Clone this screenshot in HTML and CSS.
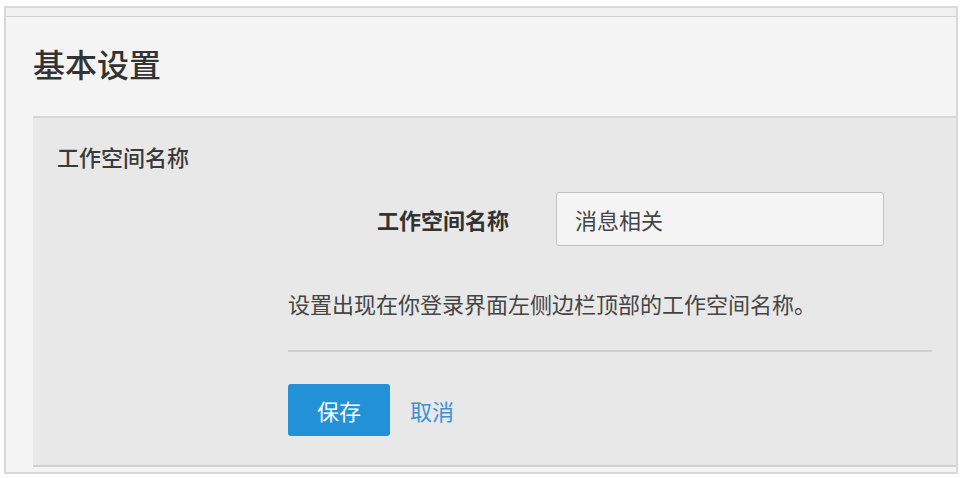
FILE: index.html
```html
<!DOCTYPE html>
<html lang="zh-CN">
<head>
    <meta charset="UTF-8" />
    <title>基本设置</title>
    <link rel="stylesheet" href="styles.css">
</head>
<body>

<div class="frame">
    <div class="top-strip"></div>

    <h1 class="page-title">基本设置</h1>

    <div class="panel">
        <div class="section-title">工作空间名称</div>

        <form class="settings-form">
            <div class="form-row">
                <label for="teamName" class="form-label">工作空间名称</label>
                <input type="text" id="teamName" class="form-input" value="消息相关" />
            </div>

            <p class="help-text">设置出现在你登录界面左侧边栏顶部的工作空间名称。</p>

            <div class="form-actions">
                <button type="button" class="btn-save">保存</button>
                <a href="#" class="link-cancel">取消</a>
            </div>
        </form>
    </div>
</div>

</body>
</html>
```

FILE: styles.css
```css
body {
    margin: 0;
    background: #fff;
    font-family: "Noto Sans CJK SC", "Noto Sans", sans-serif;
    color: #333;
}
.frame {
    margin: 6px 6px 0 4px;
    border: 2px solid #d9d9d9;
    background: #f4f4f4;
    padding-bottom: 5px;
}
.top-strip {
    height: 8px;
    background: #f0f0f0;
    border-bottom: 1px solid #d2d2d2;
}
.page-title {
    margin: 0;
    padding: 26px 0 33px 27px;
    font-size: 32px;
    line-height: 40px;
    font-weight: 500;
    color: #333;
}
.panel {
    margin-left: 27px;
    background: #e8e8e8;
    border-top: 2px solid #d6d6d6;
    border-bottom: 2px solid #d0d0d0;
    padding: 22px 24px 29px 24px;
}
.section-title {
    font-size: 22px;
    line-height: 33px;
    font-weight: 500;
    color: #3a3a3a;
}
.settings-form {
    margin: 19px 0 0 231px;
}
.form-row {
    display: flex;
    align-items: center;
    gap: 47px;
}
.form-label {
    width: 221px;
    text-align: right;
    font-size: 22px;
    font-weight: 700;
    color: #333;
}
.form-input {
    width: 328px;
    height: 54px;
    box-sizing: border-box;
    padding: 0 18px;
    border: 1px solid #c2c2c2;
    border-radius: 3px;
    background: #f4f4f4;
    font-family: inherit;
    font-size: 22px;
    color: #444;
}
.help-text {
    margin: 41px 0 0;
    font-size: 22px;
    line-height: 33px;
    color: #444;
    padding-bottom: 30px;
    border-bottom: 2px solid #cfcfcf;
}
.form-actions {
    margin-top: 32px;
    display: flex;
    align-items: center;
    gap: 20px;
}
.btn-save {
    width: 102px;
    height: 52px;
    border: none;
    border-radius: 3px;
    background: #2291d8;
    color: #fff;
    font-family: inherit;
    font-size: 22px;
}
.link-cancel {
    color: #3b93d3;
    text-decoration: none;
    font-size: 22px;
}
```
